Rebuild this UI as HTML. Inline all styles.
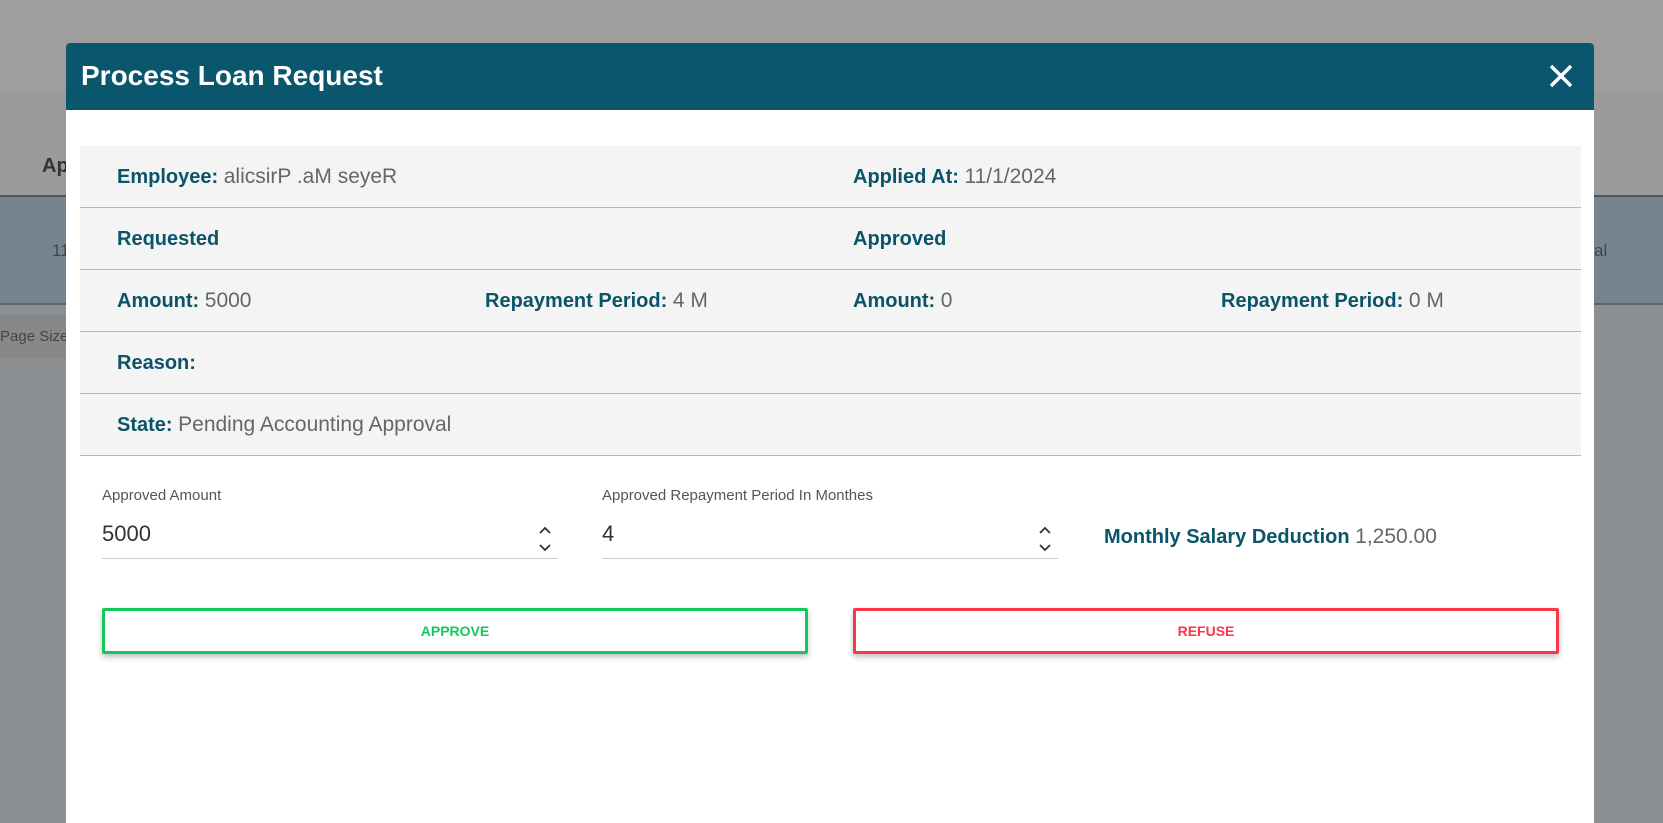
<!DOCTYPE html>
<html><head><style>
*{box-sizing:border-box;margin:0;padding:0}
body{width:1663px;height:808px;overflow:hidden;background:#8d9093;font-family:"Liberation Sans",sans-serif;position:relative}
.bg1{position:absolute;left:0;top:0;width:1663px;height:91px;background:#9e9e9e;box-shadow:0 2px 4px rgba(0,0,0,.2)}
.bg2{position:absolute;left:0;top:91px;width:1663px;height:106px;background:#9a9a9a;border-bottom:2px solid #4a5560}
.bg3{position:absolute;left:0;top:197px;width:1663px;height:108px;background:#76848f;border-bottom:2px solid #5a646c}
.bg4{position:absolute;left:0;top:315px;width:70px;height:44px;background:#888;color:#444;font-size:15px;line-height:44px}
.modal{position:absolute;left:66px;top:43px;width:1528px;height:780px;background:#fff;border-radius:4px 4px 0 0;overflow:hidden}
.hd{height:67px;background:#09566d;color:#fff;font-weight:bold;font-size:28px;padding-left:15px;line-height:66px;position:relative}
.x{position:absolute;right:20px;top:20px;width:26px;height:26px}
.panel{position:absolute;left:14px;top:103px;width:1501px;background:#f4f4f4}
.row{height:62px;border-bottom:1px solid #a9bcc8;position:relative;font-size:20px;line-height:62px}
.c{position:absolute;top:0;white-space:nowrap}
b{color:#0b5468}
.v{color:#666;font-size:21px}
.lbl{position:absolute;font-size:15px;color:#555}
.inp{position:absolute;font-size:22px;color:#333}
.ul{position:absolute;height:1px;background:#ccc}
.btn{position:absolute;top:565px;height:46px;border:3px solid;border-radius:2px;text-align:center;line-height:40px;font-weight:bold;font-size:14px;box-shadow:0 3px 6px rgba(0,0,0,.25)}
</style></head><body>
<div class="bg1"></div><div class="bg2"></div><div class="bg3"></div><div class="bg4">Page Size</div>
<div style="position:absolute;left:42px;top:155px;font-size:20px;font-weight:bold;color:#333">Ap</div>
<div style="position:absolute;left:52px;top:241px;font-size:17px;color:#444">11</div>
<div style="position:absolute;left:1594px;top:241px;font-size:17px;color:#444">al</div>
<div class="modal">
<div class="hd">Process Loan Request
<svg class="x" viewBox="0 0 26 26"><path d="M3 3L23 23M23 3L3 23" stroke="#fff" stroke-width="3.5"/></svg></div>
<div class="panel">
<div class="row"><span class="c" style="left:37px"><b>Employee:</b> <span class="v">alicsirP .aM seyeR</span></span><span class="c" style="left:773px"><b>Applied At:</b> <span class="v">11/1/2024</span></span></div>
<div class="row"><span class="c" style="left:37px"><b>Requested</b></span><span class="c" style="left:773px"><b>Approved</b></span></div>
<div class="row"><span class="c" style="left:37px"><b>Amount:</b> <span class="v">5000</span></span><span class="c" style="left:405px"><b>Repayment Period:</b> <span class="v">4 M</span></span><span class="c" style="left:773px"><b>Amount:</b> <span class="v">0</span></span><span class="c" style="left:1141px"><b>Repayment Period:</b> <span class="v">0 M</span></span></div>
<div class="row"><span class="c" style="left:37px"><b>Reason:</b></span></div>
<div class="row"><span class="c" style="left:37px"><b>State:</b> <span class="v">Pending Accounting Approval</span></span></div>
</div>
<div class="lbl" style="left:36px;top:444px">Approved Amount</div>
<div class="inp" style="left:36px;top:478px">5000</div>
<div class="ul" style="left:36px;top:515px;width:456px"></div>
<svg style="position:absolute;left:471px;top:481px" width="16" height="30" viewBox="0 0 16 30"><path d="M3 9L8 4L13 9M3 21L8 26L13 21" fill="none" stroke="#333" stroke-width="1.8"/></svg>
<div class="lbl" style="left:536px;top:444px">Approved Repayment Period In Monthes</div>
<div class="inp" style="left:536px;top:478px">4</div>
<div class="ul" style="left:536px;top:515px;width:456px"></div>
<svg style="position:absolute;left:971px;top:481px" width="16" height="30" viewBox="0 0 16 30"><path d="M3 9L8 4L13 9M3 21L8 26L13 21" fill="none" stroke="#333" stroke-width="1.8"/></svg>
<div style="position:absolute;left:1038px;top:481px;font-size:20px;line-height:26px;white-space:nowrap"><b>Monthly Salary Deduction</b> <span class="v">1,250.00</span></div>
<div class="btn" style="left:36px;width:706px;border-color:#13c95a;color:#13c95a">APPROVE</div>
<div class="btn" style="left:787px;width:706px;border-color:#fc3549;color:#fc3549">REFUSE</div>
</div>
</body></html>
